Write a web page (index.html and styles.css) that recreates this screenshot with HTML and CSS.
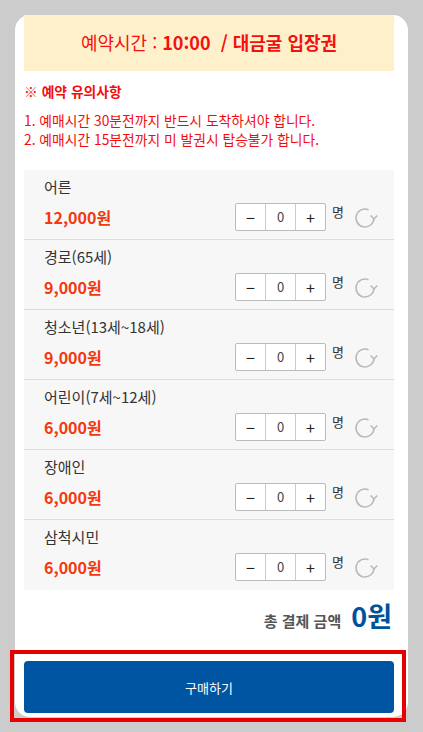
FILE: index.html
```html
<!DOCTYPE html>
<html lang="ko">
  <head>
    <meta charset="UTF-8" />
    <meta name="viewport" content="width=device-width, initial-scale=1.0" />
    <title>예약</title>
    <link rel="stylesheet" href="styles.css">
  </head>
  <body>
    <div class="card">
      <div class="banner">
        <span>예약시간 : <b>10:00&nbsp; / 대금굴 입장권</b></span>
      </div>

      <div class="notice">
        <p class="notice-title">※ <b>예약 유의사항</b></p>
        <p>1. 예매시간 30분전까지 반드시 도착하셔야 합니다.</p>
        <p>2. 예매시간 15분전까지 미 발권시 탑승불가 합니다.</p>
      </div>

      <ul class="tickets">
        <li class="ticket">
          <div class="ticket-name">어른</div>
          <div class="ticket-line">
            <span class="price">12,000원</span>
            <div class="controls">
              <div class="stepper"><button type="button">−</button><span class="count">0</span><button type="button">+</button></div>
              <span class="unit">명</span>
              <svg class="reset" width="22" height="22" viewBox="0 0 22 22"><path d="M14.5 2.7 A9 9 0 1 0 20 11.5" /><path d="M16.6 8.4 L20 12 L23.2 8.4" /></svg>
            </div>
          </div>
        </li>
        <li class="ticket">
          <div class="ticket-name">경로(65세)</div>
          <div class="ticket-line">
            <span class="price">9,000원</span>
            <div class="controls">
              <div class="stepper"><button type="button">−</button><span class="count">0</span><button type="button">+</button></div>
              <span class="unit">명</span>
              <svg class="reset" width="22" height="22" viewBox="0 0 22 22"><path d="M14.5 2.7 A9 9 0 1 0 20 11.5" /><path d="M16.6 8.4 L20 12 L23.2 8.4" /></svg>
            </div>
          </div>
        </li>
        <li class="ticket">
          <div class="ticket-name">청소년(13세~18세)</div>
          <div class="ticket-line">
            <span class="price">9,000원</span>
            <div class="controls">
              <div class="stepper"><button type="button">−</button><span class="count">0</span><button type="button">+</button></div>
              <span class="unit">명</span>
              <svg class="reset" width="22" height="22" viewBox="0 0 22 22"><path d="M14.5 2.7 A9 9 0 1 0 20 11.5" /><path d="M16.6 8.4 L20 12 L23.2 8.4" /></svg>
            </div>
          </div>
        </li>
        <li class="ticket">
          <div class="ticket-name">어린이(7세~12세)</div>
          <div class="ticket-line">
            <span class="price">6,000원</span>
            <div class="controls">
              <div class="stepper"><button type="button">−</button><span class="count">0</span><button type="button">+</button></div>
              <span class="unit">명</span>
              <svg class="reset" width="22" height="22" viewBox="0 0 22 22"><path d="M14.5 2.7 A9 9 0 1 0 20 11.5" /><path d="M16.6 8.4 L20 12 L23.2 8.4" /></svg>
            </div>
          </div>
        </li>
        <li class="ticket">
          <div class="ticket-name">장애인</div>
          <div class="ticket-line">
            <span class="price">6,000원</span>
            <div class="controls">
              <div class="stepper"><button type="button">−</button><span class="count">0</span><button type="button">+</button></div>
              <span class="unit">명</span>
              <svg class="reset" width="22" height="22" viewBox="0 0 22 22"><path d="M14.5 2.7 A9 9 0 1 0 20 11.5" /><path d="M16.6 8.4 L20 12 L23.2 8.4" /></svg>
            </div>
          </div>
        </li>
        <li class="ticket">
          <div class="ticket-name">삼척시민</div>
          <div class="ticket-line">
            <span class="price">6,000원</span>
            <div class="controls">
              <div class="stepper"><button type="button">−</button><span class="count">0</span><button type="button">+</button></div>
              <span class="unit">명</span>
              <svg class="reset" width="22" height="22" viewBox="0 0 22 22"><path d="M14.5 2.7 A9 9 0 1 0 20 11.5" /><path d="M16.6 8.4 L20 12 L23.2 8.4" /></svg>
            </div>
          </div>
        </li>
      </ul>

      <div class="total">
        <span class="total-label">총 결제 금액</span>
        <span class="total-amount">0원</span>
      </div>

      <button type="button" class="buy">구매하기</button>
    </div>

    <div class="highlight"></div>
  </body>
</html>
```

FILE: styles.css
```css
body {
  font-family: "Noto Sans CJK KR", "Noto Sans", sans-serif;
  margin: 0;
  padding: 15px 15px 15px 15px;
  background-color: #cccccc;
  position: relative;
}
.card {
  width: 393px;
  height: 702px;
  box-sizing: border-box;
  padding: 0 14px 4px 9px;
  background-color: #fff;
  border-radius: 15px;
  display: flex;
  flex-direction: column;
}
.banner {
  height: 56px;
  background-color: #fff0cc;
  color: #f41010;
  font-size: 18px;
  line-height: 54px;
  text-align: center;
}
.notice {
  color: #f20d0d;
  font-size: 13.8px;
  margin-top: 10px;
}
.notice p {
  margin: 0;
  line-height: 19px;
}
.notice .notice-title {
  line-height: 20px;
  margin-bottom: 10px;
}
.tickets {
  list-style: none;
  margin: 21px 0 0 0;
  padding: 0;
  background-color: #f7f7f7;
}
.ticket {
  height: 70px;
  box-sizing: border-box;
  padding: 6px 18px 0 20px;
  border-bottom: 1px solid #dddddd;
}
.ticket:last-child {
  border-bottom: none;
}
.ticket-name {
  font-size: 15px;
  line-height: 22px;
  color: #333;
}
.ticket-line {
  display: flex;
  justify-content: space-between;
  align-items: center;
  margin-top: 5px;
}
.price {
  font-size: 16px;
  font-weight: bold;
  color: #f4380f;
}
.controls {
  display: flex;
  align-items: center;
}
.stepper {
  display: flex;
  height: 28px;
  border: 1px solid #bbbbbb;
  border-radius: 2px;
  background-color: #fff;
  box-sizing: border-box;
}
.stepper button {
  width: 29px;
  border: none;
  background: none;
  padding: 0;
  font-family: inherit;
  font-size: 16px;
  color: #222;
  cursor: pointer;
}
.count {
  width: 29px;
  border-left: 1px solid #cccccc;
  border-right: 1px solid #cccccc;
  text-align: center;
  font-size: 13px;
  line-height: 26px;
  color: #444;
}
.unit {
  align-self: flex-start;
  font-size: 13px;
  line-height: 18px;
  color: #333;
  margin-left: 6px;
}
.reset {
  margin-left: 10px;
  margin-top: 1px;
  fill: none;
  stroke: #b8b8b8;
  stroke-width: 1.5;
  overflow: visible;
}
.total {
  display: flex;
  justify-content: flex-end;
  align-items: baseline;
  gap: 10px;
  height: 36px;
  margin-top: 8px;
  padding-right: 2px;
}
.total-label {
  font-size: 15px;
  font-weight: bold;
  color: #555;
}
.total-amount {
  font-size: 27px;
  font-weight: bold;
  color: #00529b;
  line-height: 36px;
}
.buy {
  margin-top: 27px;
  height: 52px;
  background-color: #0055a2;
  color: #fff;
  border: none;
  border-radius: 4px;
  font-family: inherit;
  font-size: 13px;
  cursor: pointer;
}
.highlight {
  position: absolute;
  left: 10px;
  top: 650px;
  width: 396px;
  height: 72px;
  box-sizing: border-box;
  border: 4px solid #e80000;
}
```
